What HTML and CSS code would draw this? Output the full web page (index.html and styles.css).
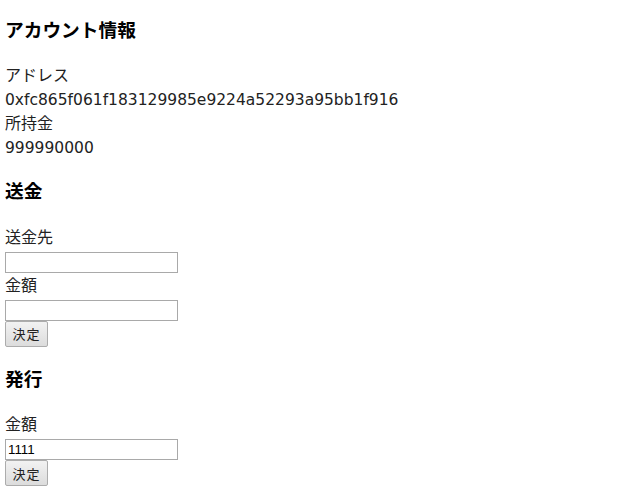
FILE: index.html
```html
<!DOCTYPE html>
<html lang="ja">
<head>
    <meta charset="UTF-8">
    <title>ウォレット</title>
    <link rel="stylesheet" href="styles.css">
</head>
<body>
    <!-- アカウント情報 -->
    <h3>アカウント情報</h3>
    <div class="label">アドレス</div>
    <div class="value">0xfc865f061f183129985e9224a52293a95bb1f916</div>
    <div class="label">所持金</div>
    <div class="value">999990000</div>

    <!-- 送金 -->
    <h3>送金</h3>
    <div class="label">送金先</div>
    <div class="field"><input type="text" class="text-input"></div>
    <div class="label">金額</div>
    <div class="field"><input type="text" class="text-input"></div>
    <div class="field actions"><button class="button">決定</button></div>

    <!-- 発行 -->
    <h3>発行</h3>
    <div class="label">金額</div>
    <div class="field"><input type="text" class="text-input" value="1111"></div>
    <div class="field actions"><button class="button">決定</button></div>
</body>
</html>
```

FILE: styles.css
```css
/* Global Styles */
body, html {
    font-family: "Noto Sans CJK JP", "Noto Sans", sans-serif;
    color: #222;
    background: #fff;
}

body {
    margin: 0 5px;
    font-size: 16px;
    line-height: 24px;
}

h3 {
    font-size: 18.72px;
    font-weight: bold;
    color: #000;
    line-height: 20px;
    margin: 18.72px 0;
    padding-bottom: 8px;
}

/* Account info */
.label {
    line-height: 18px;
    padding-bottom: 6px;
}

.value {
    font-family: "DejaVu Sans", "Noto Sans CJK JP", sans-serif;
    font-size: 15.5px;
    line-height: 22px;
    padding-bottom: 2px;
}

/* Form Styles */
.field {
    line-height: 0;
}

.actions {
    margin-top: -2px;
    padding-bottom: 2px;
}

.text-input {
    box-sizing: border-box;
    width: 173px;
    height: 21px;
    margin: 1px 0 2px;
    padding: 0 2px;
    border: 1px solid #a9a9a9;
    font-family: "Liberation Sans", sans-serif;
    font-size: 13.33px;
    color: #000;
}

.button {
    box-sizing: border-box;
    width: 43px;
    height: 26px;
    margin: 0;
    padding: 0;
    border: 1px solid #acacac;
    border-radius: 2px;
    background: linear-gradient(#f2f2f2, #dcdcdc);
    font-family: "Noto Sans CJK JP", sans-serif;
    font-size: 13px;
    letter-spacing: 1px;
    color: #222;
}
```
